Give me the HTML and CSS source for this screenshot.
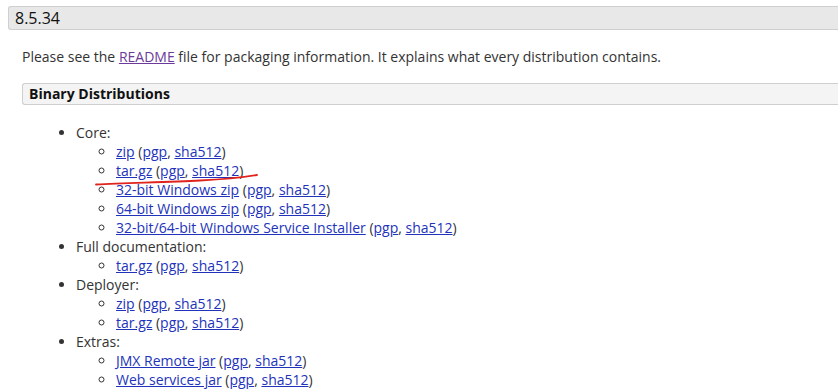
FILE: index.html
```html
<!DOCTYPE html>
<html lang="en">
<head>
    <meta charset="UTF-8">
    <meta name="viewport" content="width=device-width, initial-scale=1.0">
    <title>Tomcat 8.5.34</title>
    <link rel="stylesheet" href="styles.css">
</head>
<body>

    <h3 class="version">8.5.34</h3>

    <div class="section">
        <p class="intro">Please see the <a class="visited" href="#">README</a> file for packaging information. It explains what every distribution contains.</p>

        <h4 class="subhead">Binary Distributions</h4>

        <ul class="dist">
            <li>Core:
                <ul>
                    <li><a href="#">zip</a> (<a href="#">pgp</a>, <a href="#">sha512</a>)</li>
                    <li><a href="#">tar.gz</a> (<a href="#">pgp</a>, <a href="#">sha512</a>)</li>
                    <li><a href="#">32-bit Windows zip</a> (<a href="#">pgp</a>, <a href="#">sha512</a>)</li>
                    <li><a href="#">64-bit Windows zip</a> (<a href="#">pgp</a>, <a href="#">sha512</a>)</li>
                    <li><a href="#">32-bit/64-bit Windows Service Installer</a> (<a href="#">pgp</a>, <a href="#">sha512</a>)</li>
                </ul>
            </li>
            <li>Full documentation:
                <ul>
                    <li><a href="#">tar.gz</a> (<a href="#">pgp</a>, <a href="#">sha512</a>)</li>
                </ul>
            </li>
            <li>Deployer:
                <ul>
                    <li><a href="#">zip</a> (<a href="#">pgp</a>, <a href="#">sha512</a>)</li>
                    <li><a href="#">tar.gz</a> (<a href="#">pgp</a>, <a href="#">sha512</a>)</li>
                </ul>
            </li>
            <li>Extras:
                <ul>
                    <li><a href="#">JMX Remote jar</a> (<a href="#">pgp</a>, <a href="#">sha512</a>)</li>
                    <li><a href="#">Web services jar</a> (<a href="#">pgp</a>, <a href="#">sha512</a>)</li>
                </ul>
            </li>
        </ul>
    </div>

    <!-- hand-drawn mark under the tar.gz line -->
    <svg class="scribble" width="838" height="389" viewBox="0 0 838 389">
        <path d="M96 184.5 C 130 183, 170 182, 200 180.5 S 245 177, 257 175" fill="none" stroke="#e0231c" stroke-width="1.8" stroke-linecap="round"/>
    </svg>

</body>
</html>
```

FILE: styles.css
```css
body {
    font-family: "Open Sans", "Liberation Sans", Arial, sans-serif;
    font-size: 14px;
    color: #333;
    background-color: #fff;
    margin: 0;
    padding: 6px 0 0 8px;
    overflow: hidden;
}
a {
    color: #2233bb;
}
a.visited {
    color: #6b3a9a;
}
.version {
    margin: 0;
    padding: 0 6px;
    font-size: 16px;
    font-weight: normal;
    line-height: 22px;
    color: #111;
    background-color: #e8e8e8;
    border: 1px solid #cfcfcf;
    border-right: none;
    border-radius: 3px 0 0 3px;
}
.section {
    padding-left: 14px;
}
.intro {
    margin: 17px 0 17px;
    line-height: 19px;
}
.subhead {
    margin: 0;
    padding: 0 6px;
    font-size: 14px;
    line-height: 20px;
    color: #111;
    background-color: #f4f4f4;
    border: 1px solid #cfcfcf;
    border-right: none;
    border-radius: 3px 0 0 3px;
}
.dist {
    margin: 18px 0 0;
    padding-left: 54px;
    line-height: 19px;
}
.dist ul {
    margin: 0;
    padding-left: 40px;
    list-style-type: circle;
}
.scribble {
    position: absolute;
    left: 0;
    top: 0;
    pointer-events: none;
}
```
